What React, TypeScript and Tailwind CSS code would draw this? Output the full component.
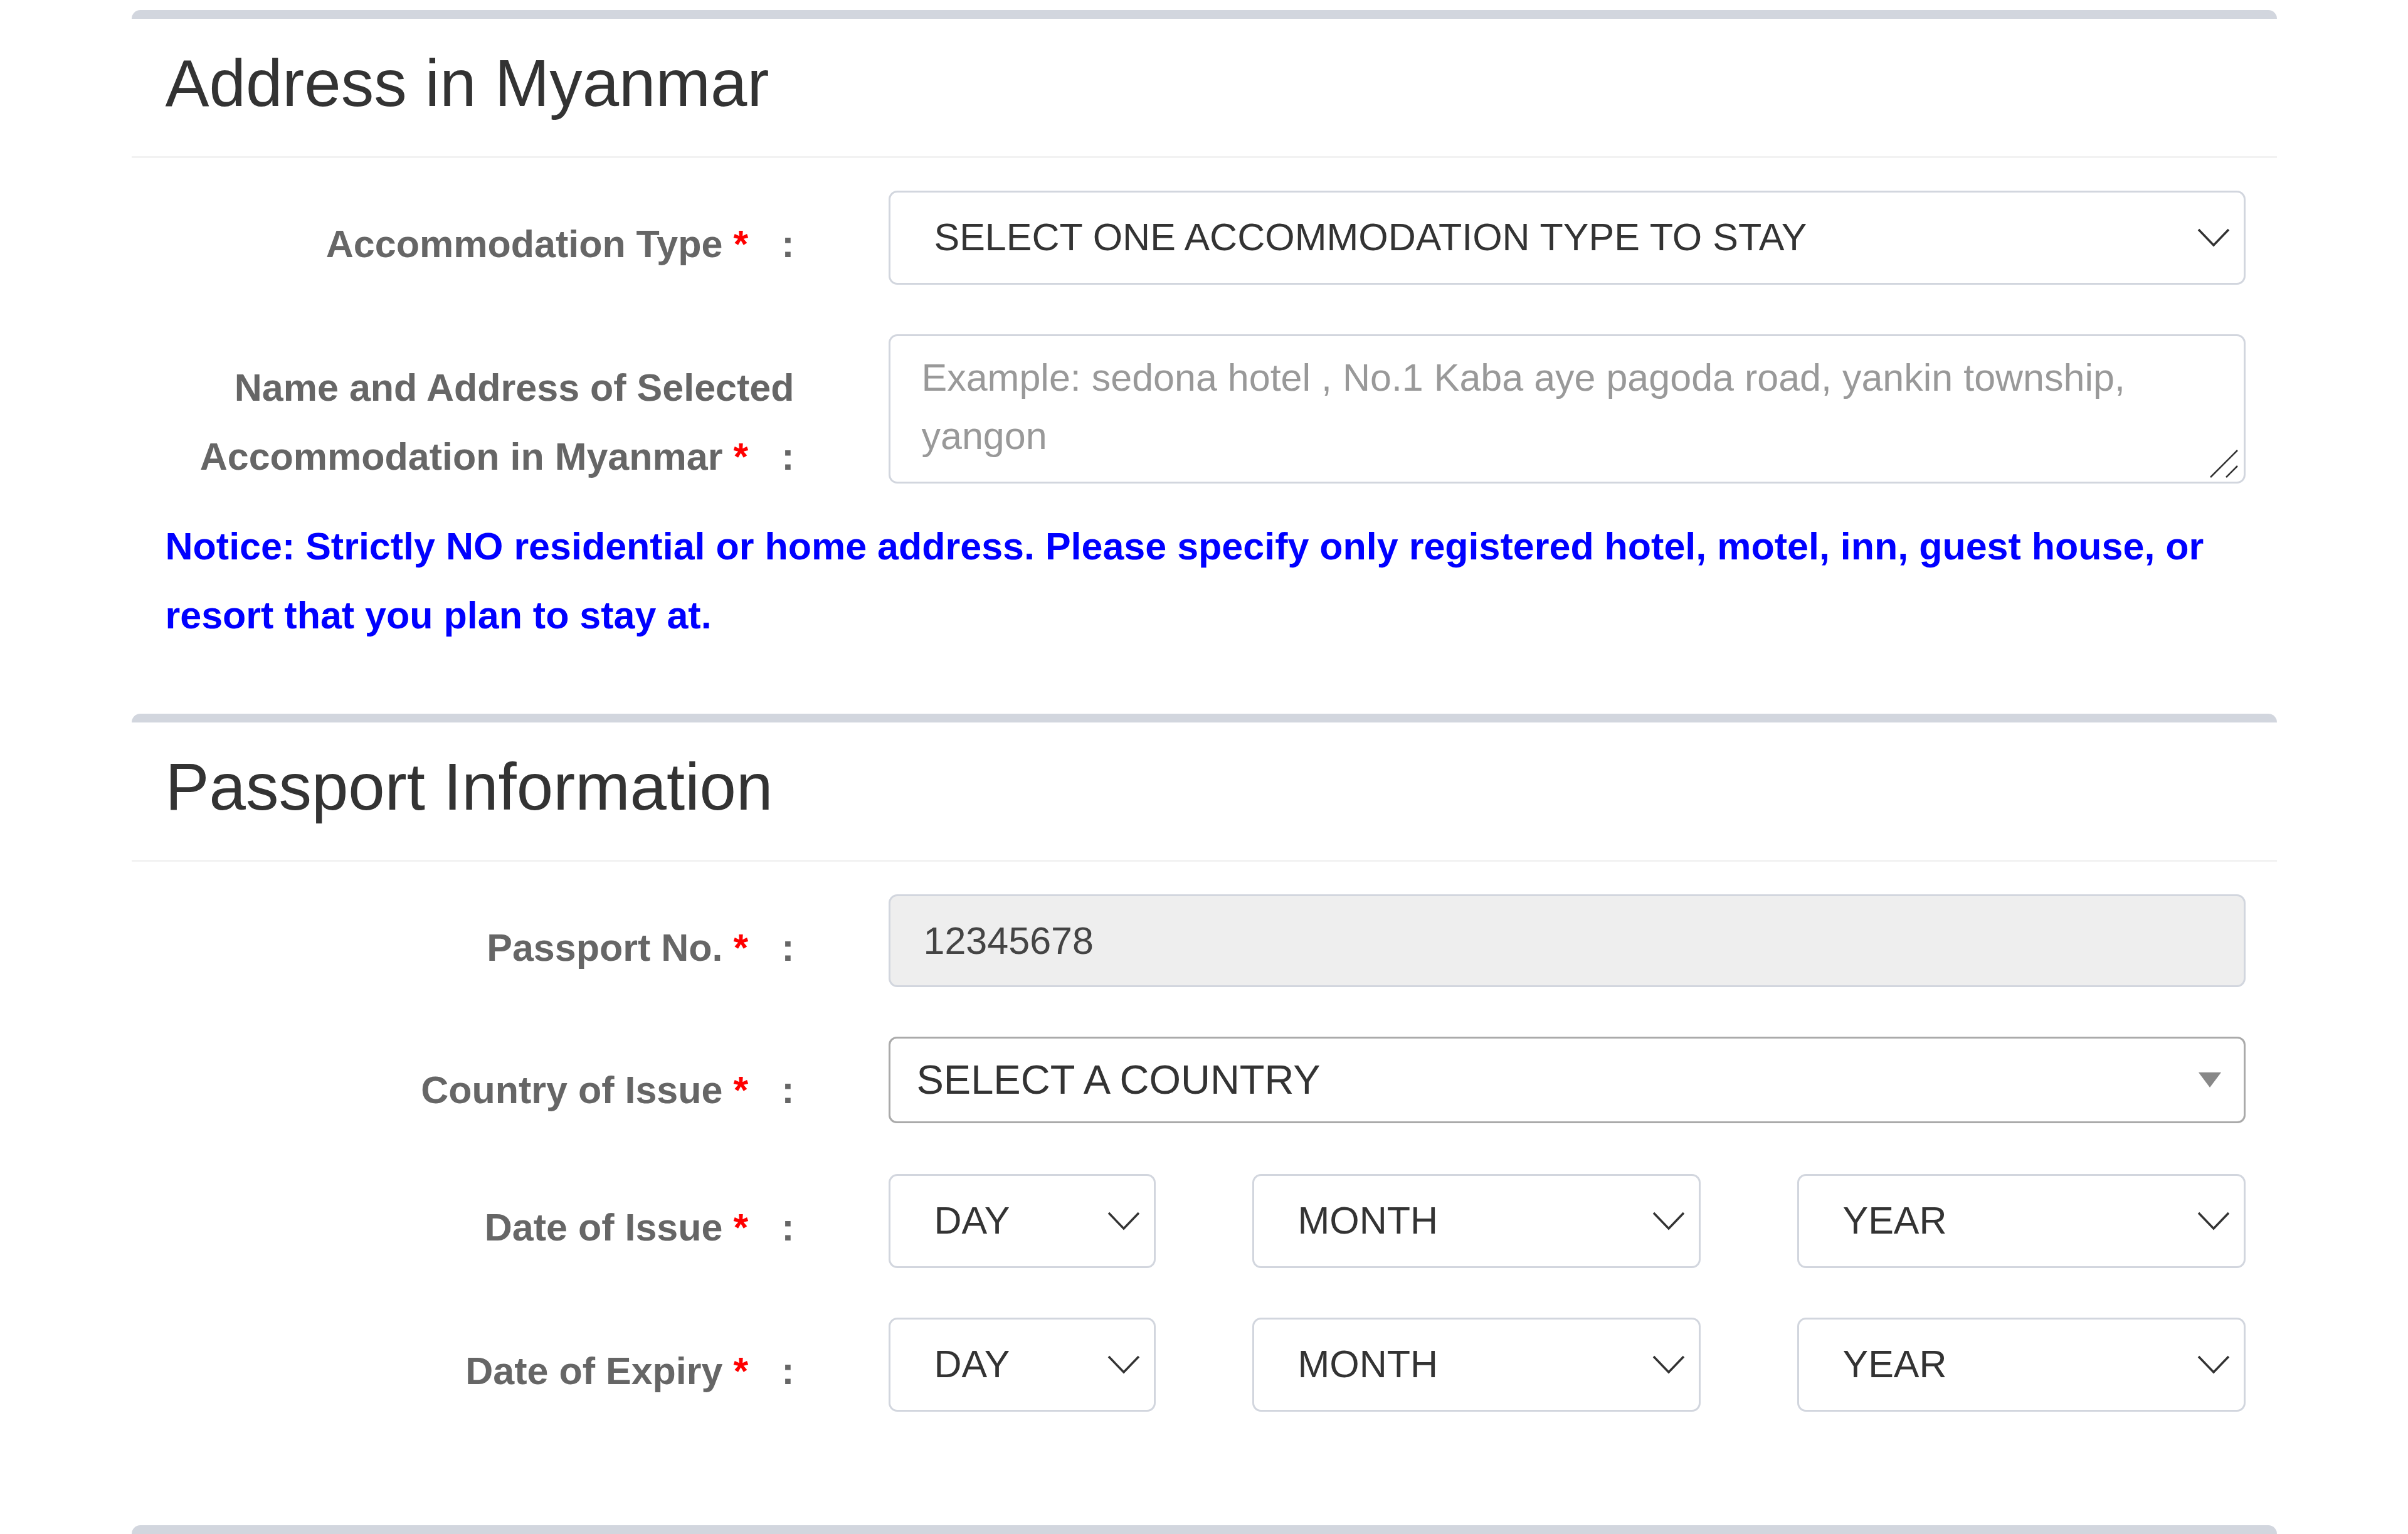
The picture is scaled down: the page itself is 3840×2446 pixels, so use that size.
import type { ReactNode } from 'react'

// ─── Piezas del formulario ─────────────────────────────────────────────────────

function Chevron() {
  return (
    <svg width="52" height="30" viewBox="0 0 52 30" fill="none" className="shrink-0">
      <polyline points="2,2 26,27 50,2" stroke="#333" strokeWidth="3.5" />
    </svg>
  )
}

function Box({ title, children }: { title: string; children?: ReactNode }) {
  return (
    <section className="mb-[102px] rounded-t-[14px] border-t-[14px] border-[#d2d6de] bg-white">
      <div className="border-b-[3px] border-[#f2f2f2] pl-[54px] pt-[45px] pb-[58px]">
        <h3 className="text-[105px] font-normal leading-[116px] text-[#333]">{title}</h3>
      </div>
      {/* flex-col para que el margen de la última fila no se colapse con el del box */}
      <div className="flex flex-col pl-[54px] pr-[50px] pt-[52px]">{children}</div>
    </section>
  )
}

function Label({ children }: { children: ReactNode }) {
  return (
    <div className="w-[1003px] shrink-0 pt-[30px] text-right text-[61px] font-bold leading-[110px] text-[#666]">
      {children} <span className="text-[#ff0000]">*</span>
      <span className="ml-[53px]">:</span>
    </div>
  )
}

function Row({ label, children, className = 'mb-[79px]' }: { label: ReactNode; children: ReactNode; className?: string }) {
  return (
    <div className={`flex gap-[150px] ${className}`}>
      <Label>{label}</Label>
      <div className="min-w-0 flex-1">{children}</div>
    </div>
  )
}

function SelectBox({ text, className = '' }: { text: string; className?: string }) {
  return (
    <div
      className={`flex h-[150px] items-center justify-between rounded-[14px] border-[3px] border-[#d2d6de] bg-white pl-[70px] pr-[22px] text-[61px] text-[#333] ${className}`}
    >
      <span>{text}</span>
      <Chevron />
    </div>
  )
}

function DateRow({ label }: { label: string }) {
  return (
    <Row label={label}>
      <div className="flex gap-[154px]">
        <SelectBox text="DAY" className="w-[426px] shrink-0" />
        <SelectBox text="MONTH" className="flex-1" />
        <SelectBox text="YEAR" className="flex-1" />
      </div>
    </Row>
  )
}

// ─── Página ────────────────────────────────────────────────────────────────────

export default function App() {
  return (
    <div className="min-h-screen bg-white pt-[16px] font-['Liberation_Sans',Arial,sans-serif]">
      <div className="mx-auto w-[3421px]">
        <Box title="Address in Myanmar">
          <Row label="Accommodation Type">
            <SelectBox text="SELECT ONE ACCOMMODATION TYPE TO STAY" />
          </Row>

          <Row
            className="mb-[33px]"
            label={
              <>
                Name and Address of Selected
                <br />
                Accommodation in Myanmar
              </>
            }
          >
            <div className="relative">
              <textarea
                rows={2}
                placeholder="Example: sedona hotel , No.1 Kaba aye pagoda road, yankin township, yangon"
                className="block h-[238px] w-full resize-none rounded-[14px] border-[3px] border-[#d2d6de] bg-white pl-[50px] pr-[60px] pt-[20px] text-[61px] leading-[93px] text-[#333] outline-none placeholder:text-[#999]"
              />
              <svg width="50" height="50" viewBox="0 0 50 50" className="pointer-events-none absolute bottom-[7px] right-[9px]">
                <line x1="3" y1="47" x2="46" y2="4" stroke="#333" strokeWidth="2.5" />
                <line x1="28" y1="47" x2="46" y2="29" stroke="#333" strokeWidth="2.5" />
              </svg>
            </div>
          </Row>

          <p className="text-[61px] font-bold leading-[110px] text-[#0000ff]">
            Notice: Strictly NO residential or home address. Please specify only registered hotel, motel, inn, guest house, or
            <br />
            resort that you plan to stay at.
          </p>
        </Box>

        <Box title="Passport Information">
          <Row label="Passport No.">
            <input
              readOnly
              value="12345678"
              className="block h-[148px] w-full rounded-[14px] border-[3px] border-[#d2d6de] bg-[#eeeeee] pl-[53px] text-[61px] text-[#444] outline-none"
            />
          </Row>

          <Row label="Country of Issue">
            <div className="flex h-[138px] items-center justify-between rounded-[13px] border-[3px] border-[#aaaaaa] bg-white pl-[42px] pr-[36px] text-[65px] text-[#333]">
              <span>SELECT A COUNTRY</span>
              <span className="h-0 w-0 border-x-[18px] border-t-[24px] border-x-transparent border-t-[#888]" />
            </div>
          </Row>

          <DateRow label="Date of Issue" />
          <DateRow label="Date of Expiry" />
        </Box>

        <Box title="" />
      </div>
    </div>
  )
}
